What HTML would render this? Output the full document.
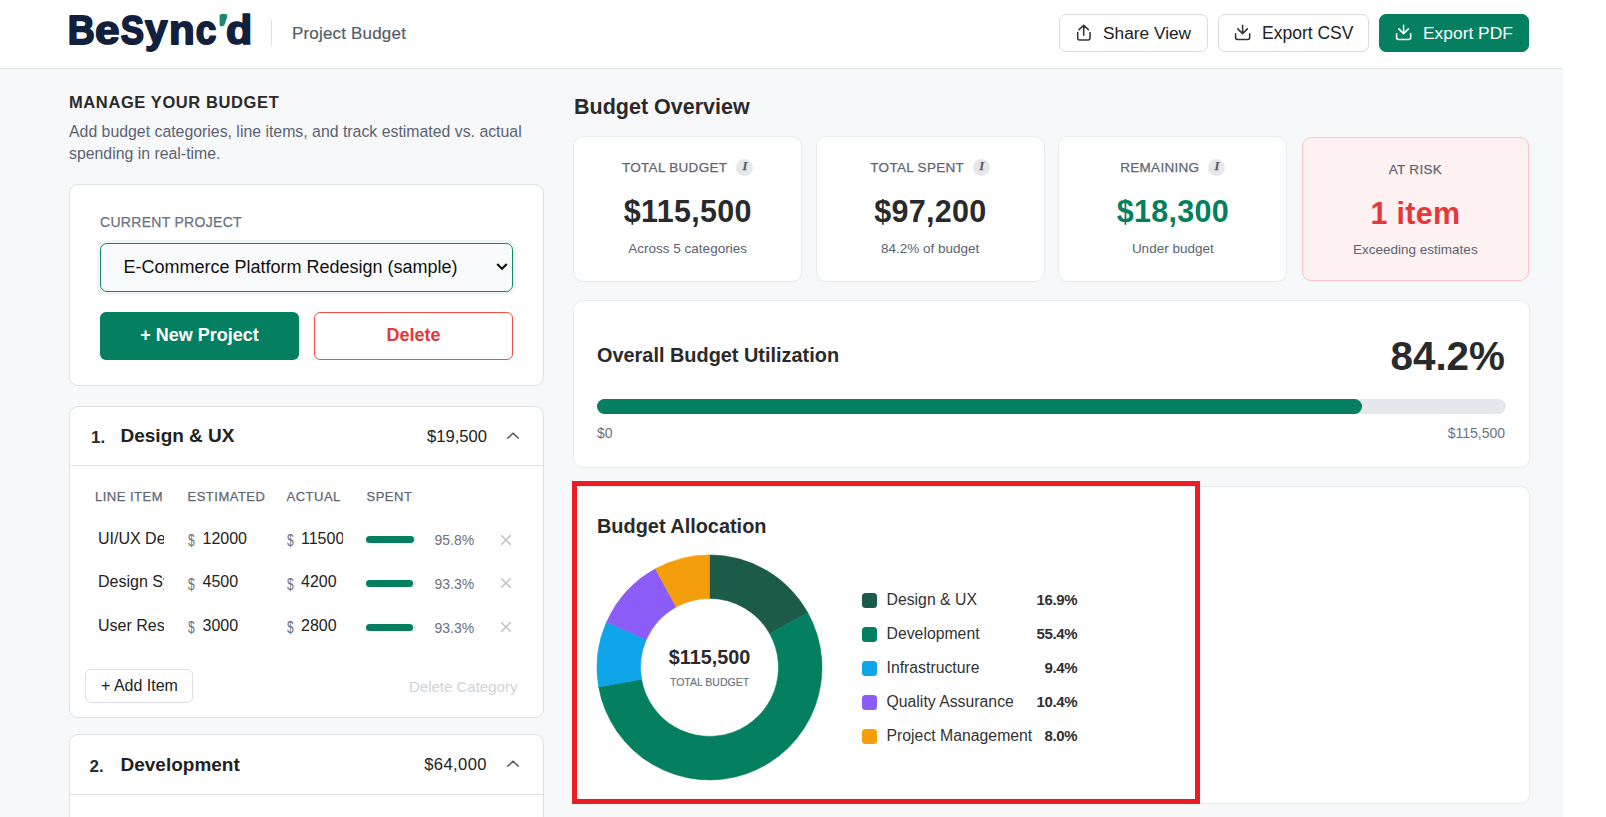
<!DOCTYPE html>
<html><head><meta charset="utf-8">
<style>
*{box-sizing:border-box;margin:0;padding:0}
html,body{width:1606px;height:817px;overflow:hidden;background:#fff;font-family:"Liberation Sans",sans-serif;color:#262626}
.t{position:absolute;line-height:1;white-space:nowrap}
.b{font-weight:bold}
.abs{position:absolute}
#hdr{position:absolute;left:0;top:0;width:1563px;height:69px;background:#fff;border-bottom:1px solid #e0e0e0}
#bg{position:absolute;left:0;top:69px;width:1563px;height:748px;background:#f7f8fa}
.card{position:absolute;background:#fff;border:1px solid #e0e0e0;border-radius:9px}
.scard{position:absolute;background:#fff;border-radius:9px;box-shadow:0 0 0 1px #ebecee,0 1px 2px rgba(0,0,0,0.04)}
.hbtn{position:absolute;top:14px;height:38px;border:1px solid #dadada;border-radius:7px;background:#fff}
.c{text-align:center}
.ic{display:inline-block;width:17px;height:0;position:relative;margin-left:9px}.ic b{position:absolute;left:0;top:-13.5px;width:17px;height:17px;border-radius:50%;background:#e5e7eb;color:#6b7280;font-family:"Liberation Serif",serif;font-style:italic;font-weight:bold;font-size:12.5px;line-height:15.5px;text-align:center;letter-spacing:0;color:#555b66}
</style></head><body>
<div id="hdr"></div>
<div id="bg"></div>

<!-- header -->
<div id="logo"><svg class="abs" style="left:0;top:0" width="270" height="60" viewBox="0 0 270 60"><g font-family="Liberation Sans" font-weight="bold" fill="#11213d" stroke="#11213d" stroke-linejoin="round"><text transform="matrix(0.18689 0 0 0.20072 67.77 43.80)" font-size="200" stroke-width="9.29">B</text><text transform="matrix(0.22083 0 0 0.20364 94.93 43.69)" font-size="200" stroke-width="8.48">e</text><text transform="matrix(0.17417 0 0 0.19859 120.86 43.70)" font-size="200" stroke-width="9.66">S</text><text transform="matrix(0.20185 0 0 0.19865 145.10 43.16)" font-size="200" stroke-width="8.99">y</text><text transform="matrix(0.21031 0 0 0.20370 169.07 43.80)" font-size="200" stroke-width="8.70">n</text><text transform="matrix(0.18454 0 0 0.20273 195.72 43.69)" font-size="200" stroke-width="9.30">c</text><text transform="matrix(0.21485 0 0 0.20000 225.98 43.70)" font-size="200" stroke-width="8.68">d</text></g><path d="M220.2 14.6Q223.5 13.3 226.7 14.3Q227.7 15.4 226.8 18.6L224.4 25Q222.2 27 219.7 25.7L219.5 16Q219.6 15 220.2 14.6Z" fill="#1b8a6e"/></svg></div>
<div class="abs" style="left:271px;top:20px;width:1px;height:26px;background:#e0e0e0"></div>
<div class="t" style="left:292px;top:24.9px;font-size:17px;letter-spacing:0.18px;color:#565d69;-webkit-text-stroke:0.2px #565d69">Project Budget</div>

<div class="hbtn" style="left:1059px;width:149px"></div>
<div class="t" style="left:1103px;top:25.4px;font-size:17.3px;color:#222">Share View</div>
<div class="hbtn" style="left:1218px;width:151px"></div>
<div class="t" style="left:1262px;top:25.4px;font-size:17.5px;color:#222">Export CSV</div>
<div class="hbtn" style="left:1379px;width:150px;background:#047f5f;border-color:#047f5f"></div>
<div class="t" style="left:1423px;top:25.4px;font-size:17.4px;color:#fff">Export PDF</div>

<svg class="abs" style="left:1076px;top:24px" width="16" height="18" viewBox="0 0 16 18" fill="none" stroke="#333" stroke-width="1.55" stroke-linecap="round" stroke-linejoin="round"><path d="M7.7 1.2V11.3M3 5.6L7.7 1.2L12.4 5.6M1.7 8.6V14Q1.7 16 3.7 16H12Q14 16 14 14V8.6"/></svg>
<svg class="abs" style="left:1234px;top:24px" width="18" height="18" viewBox="0 0 18 18" fill="none" stroke="#333" stroke-width="1.55" stroke-linecap="round" stroke-linejoin="round"><path d="M8.6 1.2V9.6M3.8 4.9L8.6 9.6L13.4 4.9M1.6 9.8V13.5Q1.6 15.4 3.5 15.4H13.8Q15.7 15.4 15.7 13.5V9.8"/></svg>
<svg class="abs" style="left:1395px;top:24px" width="18" height="18" viewBox="0 0 18 18" fill="none" stroke="#fff" stroke-width="1.55" stroke-linecap="round" stroke-linejoin="round"><path d="M8.6 1.2V9.6M3.8 4.9L8.6 9.6L13.4 4.9M1.6 9.8V13.5Q1.6 15.4 3.5 15.4H13.8Q15.7 15.4 15.7 13.5V9.8"/></svg>
<!-- left column -->
<div class="t b" style="left:69px;top:94.3px;font-size:16.5px;letter-spacing:0.6px;color:#2a2a2a">MANAGE YOUR BUDGET</div>
<div class="t" style="left:69px;top:124.2px;font-size:15.85px;color:#5b6372">Add budget categories, line items, and track estimated vs. actual</div>
<div class="t" style="left:69px;top:145.6px;font-size:15.85px;color:#5b6372">spending in real-time.</div>

<div class="card" style="left:69px;top:184px;width:475px;height:202px"></div>
<div class="t" style="left:100px;top:215.1px;font-size:14px;letter-spacing:0.3px;color:#6b7280;-webkit-text-stroke:0.25px #6b7280">CURRENT PROJECT</div>
<div class="abs" style="left:97px;top:240px;width:419px;height:55px;border-radius:9px;background:rgba(4,127,95,0.07)"></div>
<div class="abs" style="left:100px;top:243px;width:413px;height:49px;border:1.5px solid #16866a;border-radius:7px;background:#f9fafb"></div>
<div class="t" style="left:123.5px;top:257.8px;font-size:18px;color:#111">E-Commerce Platform Redesign (sample)</div>
<svg class="abs" style="left:496px;top:262px" width="12" height="10" viewBox="0 0 12 10"><path d="M1.2 2 L6 6.8 L10.8 2" fill="none" stroke="#111" stroke-width="2.2"/></svg>

<div class="abs" style="left:100px;top:312px;width:199px;height:48px;border-radius:6px;background:#047f5f"></div>
<div class="t b c" style="left:100px;width:199px;top:326px;font-size:18px;color:#fff">+ New Project</div>
<div class="abs" style="left:314px;top:312px;width:199px;height:48px;border-radius:6px;border:1px solid #ef4b4b;background:#fff"></div>
<div class="t b c" style="left:314px;width:199px;top:326px;font-size:18px;color:#e5383b">Delete</div>

<!-- category 1 -->
<div class="card" style="left:69px;top:406px;width:475px;height:312px"></div>
<div class="abs" style="left:70px;top:465px;width:473px;height:1px;background:#e2e2e2"></div>
<div class="t b" style="left:91px;top:429.2px;font-size:17px;color:#2a2a2a">1.</div>
<div class="t b" style="left:120.5px;top:425.6px;font-size:19px;color:#222">Design &amp; UX</div>
<div class="t" style="right:1119px;top:428.7px;font-size:16.6px;color:#222">$19,500</div>
<svg class="abs" style="left:505px;top:430px" width="16" height="12" viewBox="0 0 16 12"><path d="M2.3 8.6 L8 3.2 L13.7 8.6" fill="none" stroke="#4b5563" stroke-width="1.4"/></svg>

<div class="t" style="left:95px;top:490px;font-size:13px;letter-spacing:0.5px;color:#5f6673;-webkit-text-stroke:0.25px #5f6673">LINE ITEM</div>
<div class="t" style="left:187.5px;top:490px;font-size:13px;letter-spacing:0.5px;color:#5f6673;-webkit-text-stroke:0.25px #5f6673">ESTIMATED</div>
<div class="t" style="left:286.5px;top:490px;font-size:13px;letter-spacing:0.5px;color:#5f6673;-webkit-text-stroke:0.25px #5f6673">ACTUAL</div>
<div class="t" style="left:366.5px;top:490px;font-size:13px;letter-spacing:0.5px;color:#5f6673;-webkit-text-stroke:0.25px #5f6673">SPENT</div>

<div id="rows"><div class="t" style="left:98px;top:530.5px;width:66px;overflow:hidden;font-size:16px;color:#222">UI/UX Design</div>
<div class="t" style="left:187.5px;top:532.8px;font-size:15px;color:#6b7280;transform:scale(0.8,1.12);transform-origin:0 100%">$</div>
<div class="t" style="left:202.5px;top:530.5px;font-size:16px;color:#222">12000</div>
<div class="t" style="left:286.5px;top:532.8px;font-size:15px;color:#6b7280;transform:scale(0.8,1.12);transform-origin:0 100%">$</div>
<div class="t" style="left:301px;top:530.5px;width:42px;overflow:hidden;font-size:16px;color:#222">11500</div>
<div class="abs" style="left:366px;top:536.0px;width:50px;height:7px;border-radius:4px;background:#e5e7eb"></div>
<div class="abs" style="left:366px;top:536.0px;width:47.9px;height:7px;border-radius:4px;background:#047f5f"></div>
<div class="t" style="left:434.5px;top:533.1px;font-size:14px;color:#6b7280">95.8%</div>
<svg class="abs" style="left:500px;top:533.5px" width="12" height="12" viewBox="0 0 12 12"><path d="M1.2 1.2L10.8 10.8M10.8 1.2L1.2 10.8" stroke="#c0c0c3" stroke-width="1.5"/></svg>
<div class="t" style="left:98px;top:574.3px;width:66px;overflow:hidden;font-size:16px;color:#222">Design System</div>
<div class="t" style="left:187.5px;top:576.6px;font-size:15px;color:#6b7280;transform:scale(0.8,1.12);transform-origin:0 100%">$</div>
<div class="t" style="left:202.5px;top:574.3px;font-size:16px;color:#222">4500</div>
<div class="t" style="left:286.5px;top:576.6px;font-size:15px;color:#6b7280;transform:scale(0.8,1.12);transform-origin:0 100%">$</div>
<div class="t" style="left:301px;top:574.3px;width:42px;overflow:hidden;font-size:16px;color:#222">4200</div>
<div class="abs" style="left:366px;top:579.8px;width:50px;height:7px;border-radius:4px;background:#e5e7eb"></div>
<div class="abs" style="left:366px;top:579.8px;width:46.6px;height:7px;border-radius:4px;background:#047f5f"></div>
<div class="t" style="left:434.5px;top:576.9px;font-size:14px;color:#6b7280">93.3%</div>
<svg class="abs" style="left:500px;top:577.3px" width="12" height="12" viewBox="0 0 12 12"><path d="M1.2 1.2L10.8 10.8M10.8 1.2L1.2 10.8" stroke="#c0c0c3" stroke-width="1.5"/></svg>
<div class="t" style="left:98px;top:618.1px;width:66px;overflow:hidden;font-size:16px;color:#222">User Research</div>
<div class="t" style="left:187.5px;top:620.4px;font-size:15px;color:#6b7280;transform:scale(0.8,1.12);transform-origin:0 100%">$</div>
<div class="t" style="left:202.5px;top:618.1px;font-size:16px;color:#222">3000</div>
<div class="t" style="left:286.5px;top:620.4px;font-size:15px;color:#6b7280;transform:scale(0.8,1.12);transform-origin:0 100%">$</div>
<div class="t" style="left:301px;top:618.1px;width:42px;overflow:hidden;font-size:16px;color:#222">2800</div>
<div class="abs" style="left:366px;top:623.6px;width:50px;height:7px;border-radius:4px;background:#e5e7eb"></div>
<div class="abs" style="left:366px;top:623.6px;width:46.6px;height:7px;border-radius:4px;background:#047f5f"></div>
<div class="t" style="left:434.5px;top:620.7px;font-size:14px;color:#6b7280">93.3%</div>
<svg class="abs" style="left:500px;top:621.1px" width="12" height="12" viewBox="0 0 12 12"><path d="M1.2 1.2L10.8 10.8M10.8 1.2L1.2 10.8" stroke="#c0c0c3" stroke-width="1.5"/></svg></div><!--/rows-->

<div class="abs" style="left:85px;top:669px;width:108px;height:34px;border:1px solid #dcdfe4;border-radius:6px;background:#fff"></div>
<div class="t" style="left:101px;top:678px;font-size:16px;color:#222">+ Add Item</div>
<div class="t" style="left:409px;top:679px;font-size:15px;color:#cfd3d9">Delete Category</div>

<!-- category 2 -->
<div class="card" style="left:69px;top:734px;width:475px;height:120px"></div>
<div class="abs" style="left:70px;top:794px;width:473px;height:1px;background:#e2e2e2"></div>
<div class="t b" style="left:89.5px;top:758px;font-size:17px;color:#2a2a2a">2.</div>
<div class="t b" style="left:120.5px;top:754.9px;font-size:19px;color:#222">Development</div>
<div class="t" style="right:1119px;top:756.6px;font-size:16.6px;color:#222;letter-spacing:0.4px">$64,000</div>
<svg class="abs" style="left:505px;top:758px" width="16" height="12" viewBox="0 0 16 12"><path d="M2.3 8.6 L8 3.2 L13.7 8.6" fill="none" stroke="#4b5563" stroke-width="1.4"/></svg>

<!-- right column -->
<div class="t b" style="left:574px;top:96.5px;font-size:21.5px;color:#2a2a2a">Budget Overview</div>

<div id="stats"><div class="scard" style="left:574.0px;top:137px;width:227.25px;height:144px"></div>
<div class="t c" style="left:574.0px;width:227.25px;top:161.1px;font-size:13.5px;letter-spacing:0.3px;color:#5f6673;-webkit-text-stroke:0.25px #5f6673">TOTAL BUDGET<span class="ic"><b>I</b></span></div>
<div class="t b c" style="left:574.15px;width:227.25px;top:195.8px;font-size:30.5px;letter-spacing:0.3px;color:#2a2a2a">$115,500</div>
<div class="t c" style="left:574.0px;width:227.25px;top:242.3px;font-size:13.5px;color:#5b6372">Across 5 categories</div>
<div class="scard" style="left:816.58px;top:137px;width:227.25px;height:144px"></div>
<div class="t c" style="left:816.58px;width:227.25px;top:161.1px;font-size:13.5px;letter-spacing:0.3px;color:#5f6673;-webkit-text-stroke:0.25px #5f6673">TOTAL SPENT<span class="ic"><b>I</b></span></div>
<div class="t b c" style="left:816.73px;width:227.25px;top:195.8px;font-size:30.5px;letter-spacing:0.3px;color:#2a2a2a">$97,200</div>
<div class="t c" style="left:816.58px;width:227.25px;top:242.3px;font-size:13.5px;color:#5b6372">84.2% of budget</div>
<div class="scard" style="left:1059.16px;top:137px;width:227.25px;height:144px"></div>
<div class="t c" style="left:1059.16px;width:227.25px;top:161.1px;font-size:13.5px;letter-spacing:0.3px;color:#5f6673;-webkit-text-stroke:0.25px #5f6673">REMAINING<span class="ic"><b>I</b></span></div>
<div class="t b c" style="left:1059.3100000000002px;width:227.25px;top:195.8px;font-size:30.5px;letter-spacing:0.3px;color:#047f5f">$18,300</div>
<div class="t c" style="left:1059.16px;width:227.25px;top:242.3px;font-size:13.5px;color:#5b6372">Under budget</div>
<div class="abs" style="left:1301.74px;top:137px;width:227.25px;height:144px;border-radius:9px;background:#fef1f1;border:1px solid #f9c5c5"></div>
<div class="t c" style="left:1301.74px;width:227.25px;top:162.6px;font-size:13.5px;letter-spacing:0.3px;color:#5f6673;-webkit-text-stroke:0.25px #5f6673">AT RISK</div>
<div class="t b c" style="left:1301.89px;width:227.25px;top:197.8px;font-size:30.5px;letter-spacing:0.3px;color:#e5383b">1 item</div>
<div class="t c" style="left:1301.74px;width:227.25px;top:242.9px;font-size:13.5px;color:#5b6372">Exceeding estimates</div></div><!--/stats-->

<div class="scard" style="left:574px;top:301px;width:955px;height:166px"></div>
<div class="t b" style="left:597px;top:346.2px;font-size:19.9px;color:#2a2a2a">Overall Budget Utilization</div>
<div class="t b" style="right:101px;top:335.5px;font-size:40.4px;color:#2a2a2a">84.2%</div>
<div class="abs" style="left:597px;top:399px;width:909px;height:15px;border-radius:8px;background:#e4e7eb"></div>
<div class="abs" style="left:597px;top:399px;width:765px;height:15px;border-radius:8px;background:#047f5f"></div>
<div class="t" style="left:597px;top:426.3px;font-size:14px;color:#6b7280">$0</div>
<div class="t" style="right:101px;top:425.7px;font-size:14px;color:#6b7280">$115,500</div>

<div class="scard" style="left:574px;top:487px;width:955px;height:316px"></div>
<div class="t b" style="left:597px;top:517px;font-size:19.9px;color:#2a2a2a">Budget Allocation</div>
<div id="donut"><svg class="abs" style="left:0;top:0" width="1606" height="817" viewBox="0 0 1606 817">
<path d="M709.50 554.90A112.5 112.5 0 0 1 807.68 612.48L769.72 633.72A69 69 0 0 0 709.50 598.40Z" fill="#1c5b47" stroke="#1c5b47" stroke-width="0.6"/>
<path d="M807.68 612.48A112.5 112.5 0 1 1 598.70 686.90L641.54 679.36A69 69 0 1 0 769.72 633.72Z" fill="#047f5f" stroke="#047f5f" stroke-width="0.6"/>
<path d="M598.70 686.90A112.5 112.5 0 0 1 606.59 621.95L646.38 639.53A69 69 0 0 0 641.54 679.36Z" fill="#0ea5e9" stroke="#0ea5e9" stroke-width="0.6"/>
<path d="M606.59 621.95A112.5 112.5 0 0 1 655.35 568.79L676.29 606.92A69 69 0 0 0 646.38 639.53Z" fill="#8b5cf6" stroke="#8b5cf6" stroke-width="0.6"/>
<path d="M655.35 568.79A112.5 112.5 0 0 1 709.50 554.90L709.50 598.40A69 69 0 0 0 676.29 606.92Z" fill="#f59e0b" stroke="#f59e0b" stroke-width="0.6"/>
</svg>
<div class="t b c" style="left:609.5px;width:200px;top:648.2px;font-size:19.8px;color:#2a2a2a">$115,500</div>
<div class="t c" style="left:609.5px;width:200px;top:677.1px;font-size:10.5px;letter-spacing:0px;color:#6b7280;-webkit-text-stroke:0.15px #6b7280">TOTAL BUDGET</div></div><!--/donut-->
<div id="legend"><div class="abs" style="left:862px;top:592.6px;width:15px;height:15px;border-radius:3.5px;background:#1c5b47"></div>
<div class="t" style="left:886.5px;top:591.9px;font-size:15.8px;color:#333">Design &amp; UX</div>
<div class="t b" style="right:528.7px;top:591.6px;font-size:15px;letter-spacing:-0.35px;color:#2f2f2f">16.9%</div>
<div class="abs" style="left:862px;top:626.6px;width:15px;height:15px;border-radius:3.5px;background:#047f5f"></div>
<div class="t" style="left:886.5px;top:625.9px;font-size:15.8px;color:#333">Development</div>
<div class="t b" style="right:528.7px;top:625.6px;font-size:15px;letter-spacing:-0.35px;color:#2f2f2f">55.4%</div>
<div class="abs" style="left:862px;top:660.6px;width:15px;height:15px;border-radius:3.5px;background:#0ea5e9"></div>
<div class="t" style="left:886.5px;top:659.9px;font-size:15.8px;color:#333">Infrastructure</div>
<div class="t b" style="right:528.7px;top:659.6px;font-size:15px;letter-spacing:-0.35px;color:#2f2f2f">9.4%</div>
<div class="abs" style="left:862px;top:694.6px;width:15px;height:15px;border-radius:3.5px;background:#8b5cf6"></div>
<div class="t" style="left:886.5px;top:693.9px;font-size:15.8px;color:#333">Quality Assurance</div>
<div class="t b" style="right:528.7px;top:693.6px;font-size:15px;letter-spacing:-0.35px;color:#2f2f2f">10.4%</div>
<div class="abs" style="left:862px;top:728.6px;width:15px;height:15px;border-radius:3.5px;background:#f59e0b"></div>
<div class="t" style="left:886.5px;top:727.9px;font-size:15.8px;color:#333">Project Management</div>
<div class="t b" style="right:528.7px;top:727.6px;font-size:15px;letter-spacing:-0.35px;color:#2f2f2f">8.0%</div></div><!--/legend-->

<div class="abs" style="left:572px;top:481px;width:628px;height:323px;border:5px solid #ec1c24"></div>
</body></html>
